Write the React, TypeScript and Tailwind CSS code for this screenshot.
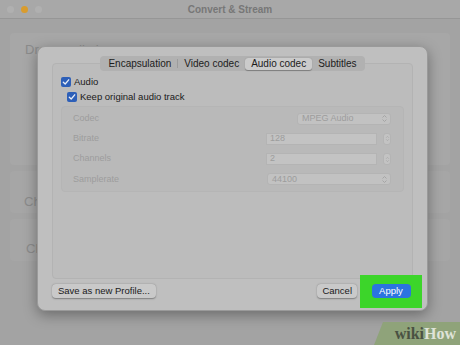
import React from "react";

const font = { fontFamily: '"Helvetica Neue", "Liberation Sans", Arial, sans-serif' };

function Check() {
  return (
    <span className="flex h-[10px] w-[10px] items-center justify-center rounded-[2px] bg-[#2d5fb8]">
      <svg width="8" height="8" viewBox="0 0 8 8">
        <path d="M1.3 4.2 L3.2 6 L6.7 1.8" fill="none" stroke="#e8eef8" strokeWidth="1.3" strokeLinecap="round" strokeLinejoin="round" />
      </svg>
    </span>
  );
}

function Updown({ size = 7 }: { size?: number }) {
  return (
    <svg width={size} height={size + 2} viewBox="0 0 7 9">
      <path d="M1.5 3.5 L3.5 1.5 L5.5 3.5 M1.5 5.5 L3.5 7.5 L5.5 5.5" fill="none" stroke="#a2a2a2" strokeWidth="0.9" />
    </svg>
  );
}

function Stepper() {
  return (
    <span className="flex h-[12px] w-[8px] items-center justify-center rounded-[3px] border border-[#b4b4b4] bg-[#c3c3c3]">
      <Updown size={5} />
    </span>
  );
}

export default function App() {
  return (
    <div className="relative h-[345px] w-[460px] overflow-hidden bg-[#a3a3a3]" style={font}>
      {/* title bar */}
      <div className="relative flex h-[19px] items-center border-b border-[#969696] bg-[#a8a8a8]">
        <div className="flex gap-[7px] pl-[7px]">
          <span className="h-[7px] w-[7px] rounded-full bg-[#b0b0b0]" />
          <span className="h-[7px] w-[7px] rounded-full bg-[#d99c2e]" />
          <span className="h-[7px] w-[7px] rounded-full bg-[#b0b0b0]" />
        </div>
        <div className="absolute inset-0 flex items-center justify-center text-[10px] font-bold text-[#777]">
          Convert &amp; Stream
        </div>
      </div>

      {/* background window content */}
      <div className="flex flex-col gap-[6px] px-[10px] pt-[14px]">
        <div className="h-[132px] rounded-[4px] bg-[#a7a7a7] px-[15px] pt-[7px] text-[13px] text-[#8b8b8b]">Drop media here</div>
        <div className="h-[42px] rounded-[4px] bg-[#a6a6a6] px-[14px] pt-[21px] text-[13px] text-[#8b8b8b]">Choose Profile</div>
        <div className="h-[42px] rounded-[4px] bg-[#a6a6a6] px-[16px] pt-[20px] text-[13px] text-[#8b8b8b]">Choose Destination</div>
      </div>

      {/* dialog */}
      <div className="absolute left-[37px] top-[46px] flex h-[265px] w-[391px] flex-col rounded-[8px] border border-[#9a9a9a] bg-[#bfbfbf] px-[14px] pt-[9px] shadow-[0_4px_14px_rgba(0,0,0,0.35)]">
        {/* tabs */}
        <div className="relative z-10 flex shrink-0 justify-center">
          <div className="flex h-[15px] items-center rounded-[4px] bg-[#b1b1b1] px-[2px] text-[10px] text-[#1c1c1c]">
            <span className="px-[6px]">Encapsulation</span>
            <span className="h-[9px] w-px bg-[#9c9c9c]" />
            <span className="px-[6px]">Video codec</span>
            <span className="flex h-[12px] items-center rounded-[3px] bg-[#cbcbcb] px-[6px] shadow-[0_0.5px_1px_rgba(0,0,0,0.3)]">Audio codec</span>
            <span className="px-[6px]">Subtitles</span>
          </div>
        </div>
        {/* panel */}
        <div className="-mt-[8px] flex h-[216px] shrink-0 flex-col rounded-[4px] border border-[#b3b3b3] bg-[#bcbcbc] px-[8px] pt-[13px]">
          <label className="flex h-[10px] items-center gap-[3px] text-[9.5px] leading-none text-[#1a1a1a]">
            <Check />
            Audio
          </label>
          <label className="ml-[6px] mt-[5px] flex h-[10px] items-center gap-[3px] text-[9.5px] leading-none text-[#1a1a1a]">
            <Check />
            Keep original audio track
          </label>
          <div className="mt-[4px] flex h-[86px] flex-col justify-between rounded-[4px] border border-[#b5b5b5] bg-[#b9b9b9] py-[5px] pl-[11px] pr-[12px] text-[9px] text-[#9d9d9d]">
            <div className="flex h-[13px] items-center justify-between">
              <span>Codec</span>
              <span className="flex h-[12px] w-[94px] items-center justify-between rounded-[3px] border border-[#b4b4b4] bg-[#c2c2c2] pl-[4px] pr-[2px]">
                MPEG Audio <Updown />
              </span>
            </div>
            <div className="flex h-[13px] items-center justify-between">
              <span>Bitrate</span>
              <div className="flex items-center gap-[6px]">
                <span className="flex h-[12px] w-[111px] items-center border border-[#b4b4b4] bg-[#c3c3c3] pl-[3px]">128</span>
                <Stepper />
              </div>
            </div>
            <div className="flex h-[13px] items-center justify-between">
              <span>Channels</span>
              <div className="flex items-center gap-[6px]">
                <span className="flex h-[12px] w-[111px] items-center border border-[#b4b4b4] bg-[#c3c3c3] pl-[3px]">2</span>
                <Stepper />
              </div>
            </div>
            <div className="flex h-[13px] items-center justify-between">
              <span>Samplerate</span>
              <span className="flex h-[12px] w-[124px] items-center justify-between rounded-[3px] border border-[#b4b4b4] bg-[#c2c2c2] pl-[4px] pr-[2px]">
                44100 <Updown />
              </span>
            </div>
          </div>
        </div>
        {/* buttons */}
        <div className="mt-[5px] flex h-[14px] shrink-0 items-center justify-between">
          <span className="flex h-[14px] items-center rounded-[4px] bg-[#c9c9c9] px-[6px] text-[9.5px] text-[#1a1a1a] shadow-[0_0.5px_1.5px_rgba(0,0,0,0.35)]">
            Save as new Profile...
          </span>
          <div className="flex h-[14px] items-center">
            <span className="flex h-[14px] items-center rounded-[4px] bg-[#c9c9c9] px-[5px] text-[9.5px] text-[#1a1a1a] shadow-[0_0.5px_1.5px_rgba(0,0,0,0.35)]">
              Cancel
            </span>
            <span className="-my-[10px] -mr-[9px] ml-[3px] flex h-[33px] w-[62px] items-center justify-center bg-[#3cd52a]">
              <span className="flex h-[14px] w-[39px] items-center justify-center rounded-[4px] bg-[#2b74e0] text-[9.5px] text-white">
                Apply
              </span>
            </span>
          </div>
        </div>
      </div>

      {/* wikiHow logo */}
      <div className="absolute bottom-0 right-0 flex h-[23px] w-[86px] items-center justify-end bg-[#8fa37a] pr-[4px] [clip-path:polygon(9px_0,100%_0,100%_100%,0_100%)]">
        <span className="text-[16px] font-bold leading-none" style={{ fontFamily: '"Liberation Serif", serif' }}>
          <span className="text-[#4a5142]">wiki</span>
          <span className="text-[#dfe3d8]">How</span>
        </span>
      </div>
    </div>
  );
}
